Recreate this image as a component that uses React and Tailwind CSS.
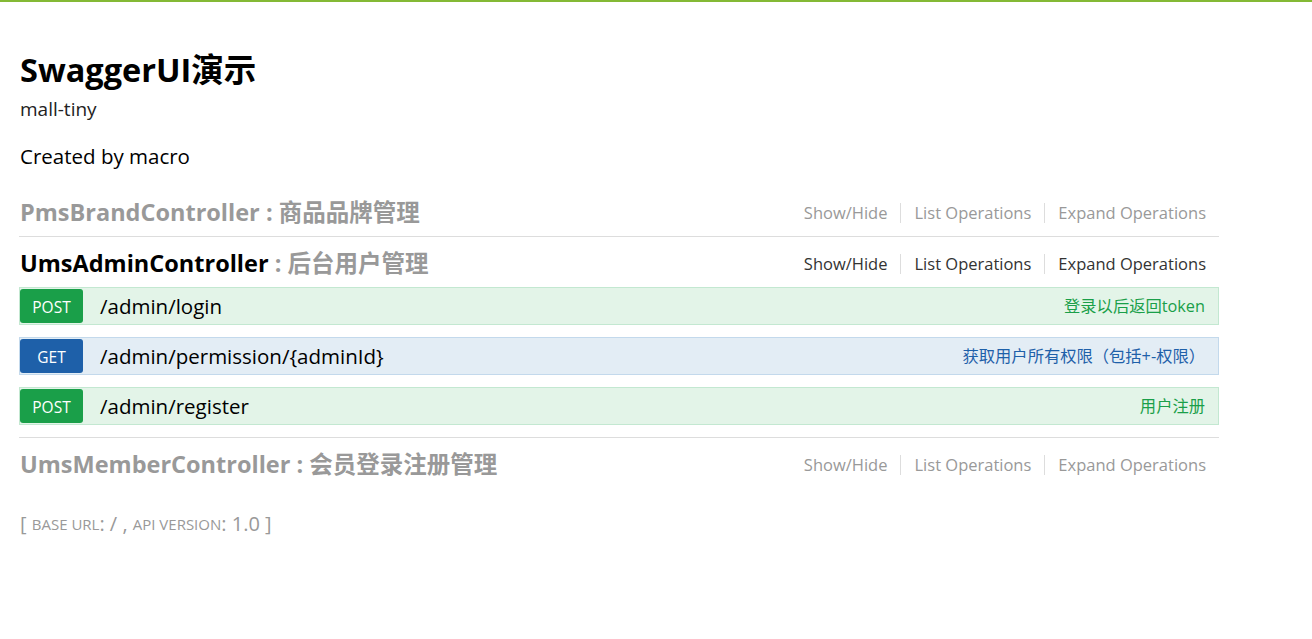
import React from "react";

const Links = ({ active }) => {
  const c = active ? "text-[#333333]" : "text-[#999999]";
  const items = ["Show/Hide", "List Operations", "Expand Operations"];
  return (
    <ul className="flex items-center">
      {items.map((t, i) => (
        <li
          key={t}
          className={
            "h-[20px] flex items-center px-[13px] text-[16.5px] " +
            c +
            (i > 0 ? " border-l border-[#dddddd]" : "")
          }
        >
          {t}
        </li>
      ))}
    </ul>
  );
};

const Heading = ({ name, desc, active }) => (
  <div className="h-[50px] pt-[4px] flex items-center justify-between">
    <h2 className="pl-px text-[23.5px] font-bold leading-none whitespace-nowrap">
      <span className={active ? "text-black" : "text-[#999999]"}>{name}</span>
      <span className="text-[#999999]"> : {desc}</span>
    </h2>
    <Links active={active} />
  </div>
);

const Row = ({ method, path, desc }) => {
  const post = method === "POST";
  return (
    <div
      className={
        "h-[38px] mb-[12px] flex items-center border " +
        (post ? "bg-[#e3f4e8] border-[#c3e8d1]" : "bg-[#e3edf5] border-[#c3d9ec]")
      }
    >
      <span
        className={
          "w-[63px] h-[34px] pt-[3px] rounded-[3px] flex items-center justify-center text-white text-[15.5px] leading-none " +
          (post ? "bg-[#1a9f49]" : "bg-[#1e60a9]")
        }
      >
        {method}
      </span>
      <span className="ml-[17px] text-[20.5px] text-black leading-none">{path}</span>
      <span
        className={
          "ml-auto pr-[13px] text-[16.3px] leading-none " +
          (post ? "text-[#1a9f49]" : "text-[#1e60a9]")
        }
      >
        {desc}
      </span>
    </div>
  );
};

export default function App() {
  return (
    <div className="min-h-[639px] bg-white font-['Open_Sans','Noto_Sans_CJK_SC',sans-serif]">
      <div className="h-[2px] bg-[#84b935]" />
      <div className="w-[1200px] ml-[19px]">
        <div className="h-[47px]" />
        <div className="h-[42px] flex items-center pl-px text-[32.5px] font-bold text-black leading-none">
          SwaggerUI演示
        </div>
        <div className="h-[36px] flex items-center pl-px text-[19px] text-[#222222] leading-none">
          mall-tiny
        </div>
        <div className="h-[59px] flex items-center pl-px text-[20.5px] text-black leading-none">
          Created by macro
        </div>
        <ul>
          <li className="border-b border-[#dddddd]">
            <Heading name="PmsBrandController" desc="商品品牌管理" />
          </li>
          <li className="border-b border-[#dddddd]">
            <Heading name="UmsAdminController" desc="后台用户管理" active />
            <div>
              <Row method="POST" path="/admin/login" desc="登录以后返回token" />
              <Row
                method="GET"
                path="/admin/permission/{adminId}"
                desc="获取用户所有权限（包括+-权限）"
              />
              <Row method="POST" path="/admin/register" desc="用户注册" />
            </div>
          </li>
          <li>
            <Heading name="UmsMemberController" desc="会员登录注册管理" />
          </li>
        </ul>
        <div className="h-[72px] flex items-center pl-px text-[#999999] text-[20px] leading-none">
          <span>[&nbsp;</span>
          <span className="text-[15px]">BASE URL</span>
          <span>:&nbsp;/&nbsp;,&nbsp;</span>
          <span className="text-[15px]">API VERSION</span>
          <span>:&nbsp;1.0&nbsp;]</span>
        </div>
      </div>
    </div>
  );
}
